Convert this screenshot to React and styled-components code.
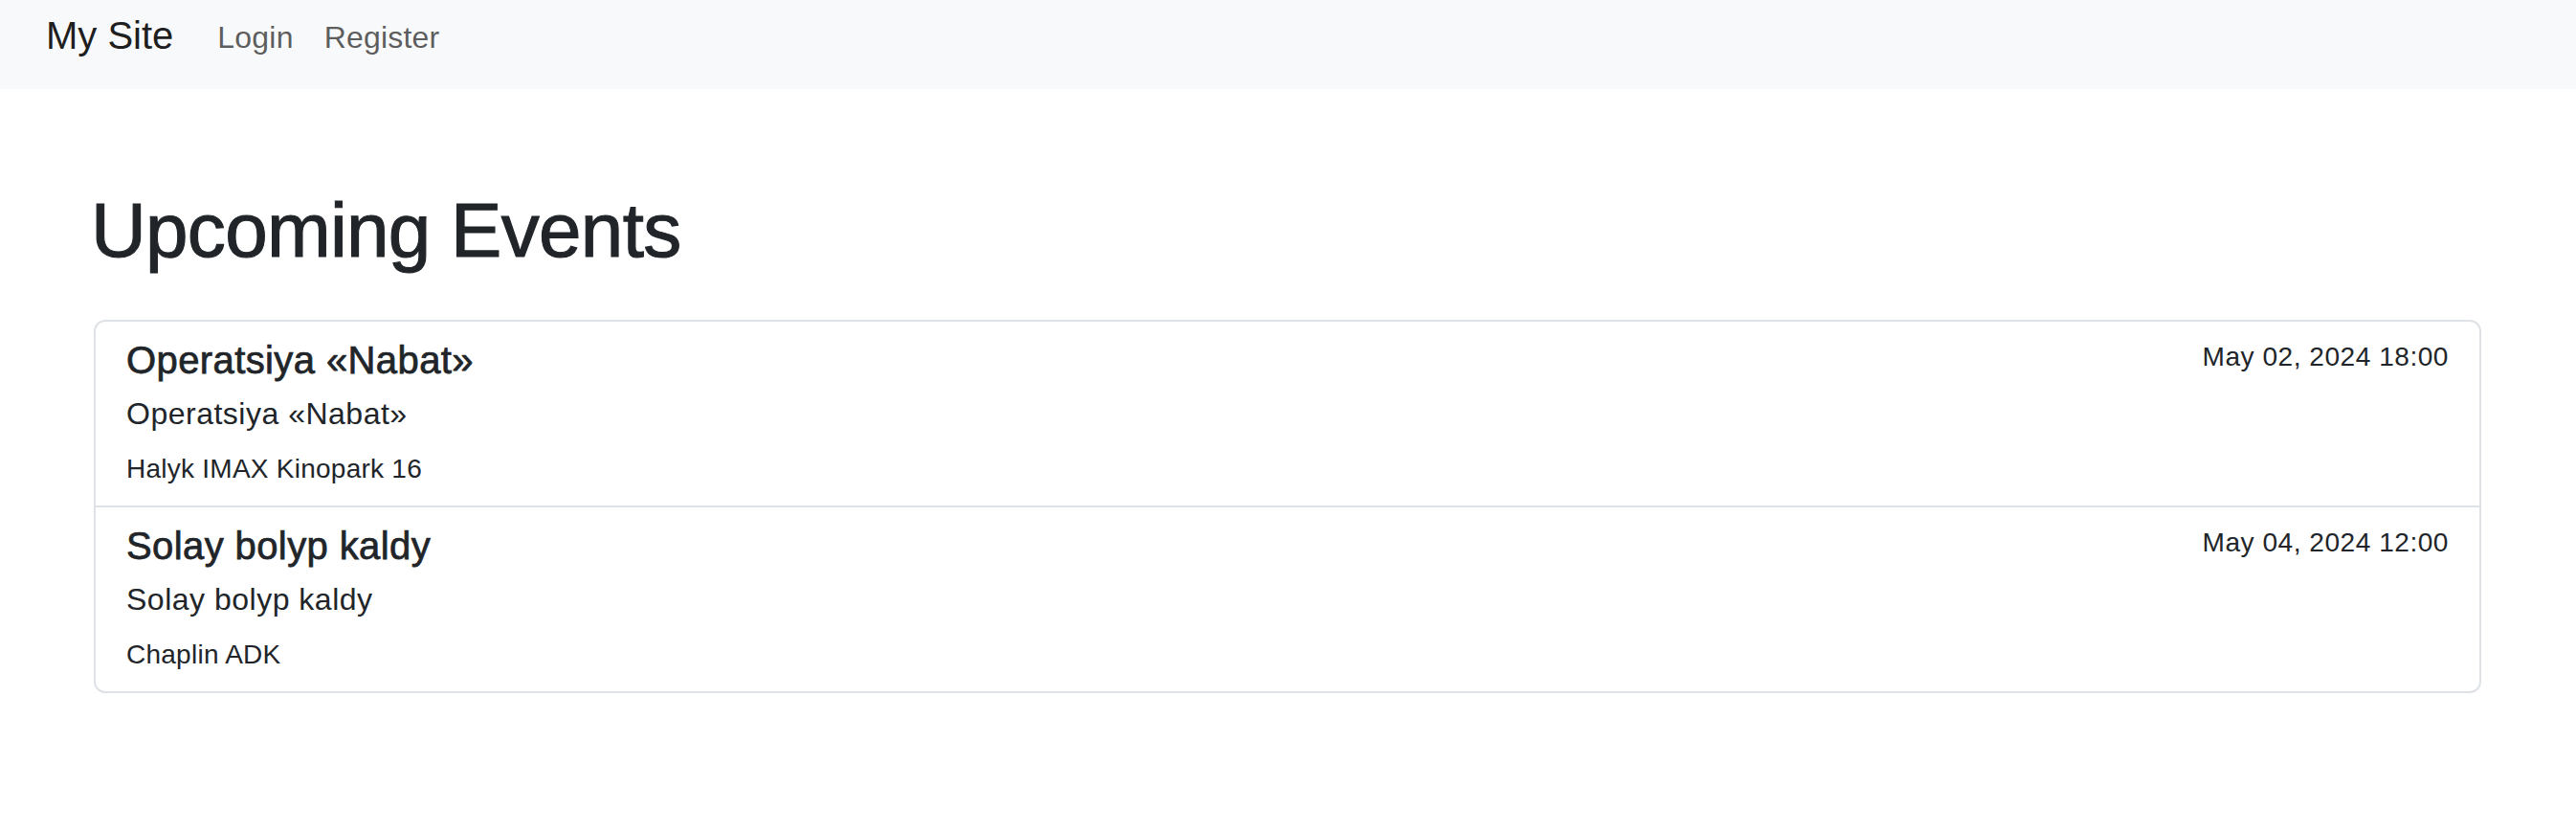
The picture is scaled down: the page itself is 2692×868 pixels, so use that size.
import React from "react";
import styled, { createGlobalStyle } from "styled-components";

const GlobalStyle = createGlobalStyle`
  html, body {
    margin: 0;
    padding: 0;
    background: #ffffff;
  }
  body {
    font-family: "Liberation Sans", Arial, sans-serif;
    color: #212529;
    font-size: 32px;
    line-height: 1.5;
  }
  * { box-sizing: border-box; }
`;

const Navbar = styled.nav`
  height: 93px;
  background: #f8f9fa;
  padding: 7px 48px 0;
  display: flex;
  align-items: flex-start;
`;

const Brand = styled.a`
  font-size: 40px;
  line-height: 60px;
  color: rgba(0, 0, 0, 0.9);
  text-decoration: none;
  margin-right: 30px;
`;

const NavList = styled.ul`
  list-style: none;
  margin: 0;
  padding: 0;
  display: flex;
`;

const NavLink = styled.a`
  display: block;
  font-size: 32px;
  line-height: 48px;
  padding: 8px 16px 0;
  color: rgba(0, 0, 0, 0.65);
  text-decoration: none;
  letter-spacing: 0.2px;
`;

const Main = styled.main`
  padding: 100px 99px 0 98px;
`;

const Heading = styled.h1`
  margin: 0 0 45px -3px;
  font-size: 80px;
  line-height: 96px;
  font-weight: 400;
  letter-spacing: -0.7px;
  -webkit-text-stroke: 1.1px #212529;
  color: #212529;
`;

const EventList = styled.div`
  border: 2px solid #dee2e6;
  border-radius: 12px;
  display: flex;
  flex-direction: column;
`;

const EventItem = styled.a`
  display: block;
  padding: 16px 32px 17px;
  color: #212529;
  text-decoration: none;
  & + & {
    border-top: 2px solid #dee2e6;
  }
`;

const ItemHeader = styled.div`
  display: flex;
  justify-content: space-between;
  align-items: flex-start;
  margin-bottom: 8px;
`;

const Title = styled.h5`
  margin: 0;
  font-size: 40px;
  line-height: 48px;
  font-weight: 400;
  letter-spacing: 0.4px;
  -webkit-text-stroke: 0.75px #212529;
`;

const DateText = styled.small`
  font-size: 28px;
  line-height: 42px;
  letter-spacing: 0.55px;
`;

const Subtitle = styled.p`
  margin: 0 0 13px;
  font-size: 32px;
  line-height: 48px;
  letter-spacing: 0.5px;
`;

const Venue = styled.small`
  display: block;
  font-size: 28px;
  line-height: 42px;
  letter-spacing: 0.25px;
`;

const events = [
  {
    title: "Operatsiya «Nabat»",
    description: "Operatsiya «Nabat»",
    venue: "Halyk IMAX Kinopark 16",
    date: "May 02, 2024 18:00",
  },
  {
    title: "Solay bolyp kaldy",
    description: "Solay bolyp kaldy",
    venue: "Chaplin ADK",
    date: "May 04, 2024 12:00",
  },
];

export default function App() {
  return (
    <>
      <GlobalStyle />
      <Navbar>
        <Brand href="#">My Site</Brand>
        <NavList>
          <li>
            <NavLink href="#">Login</NavLink>
          </li>
          <li>
            <NavLink href="#">Register</NavLink>
          </li>
        </NavList>
      </Navbar>
      <Main>
        <Heading>Upcoming Events</Heading>
        <EventList>
          {events.map((e) => (
            <EventItem href="#" key={e.title}>
              <ItemHeader>
                <Title>{e.title}</Title>
                <DateText>{e.date}</DateText>
              </ItemHeader>
              <Subtitle>{e.description}</Subtitle>
              <Venue>{e.venue}</Venue>
            </EventItem>
          ))}
        </EventList>
      </Main>
    </>
  );
}
